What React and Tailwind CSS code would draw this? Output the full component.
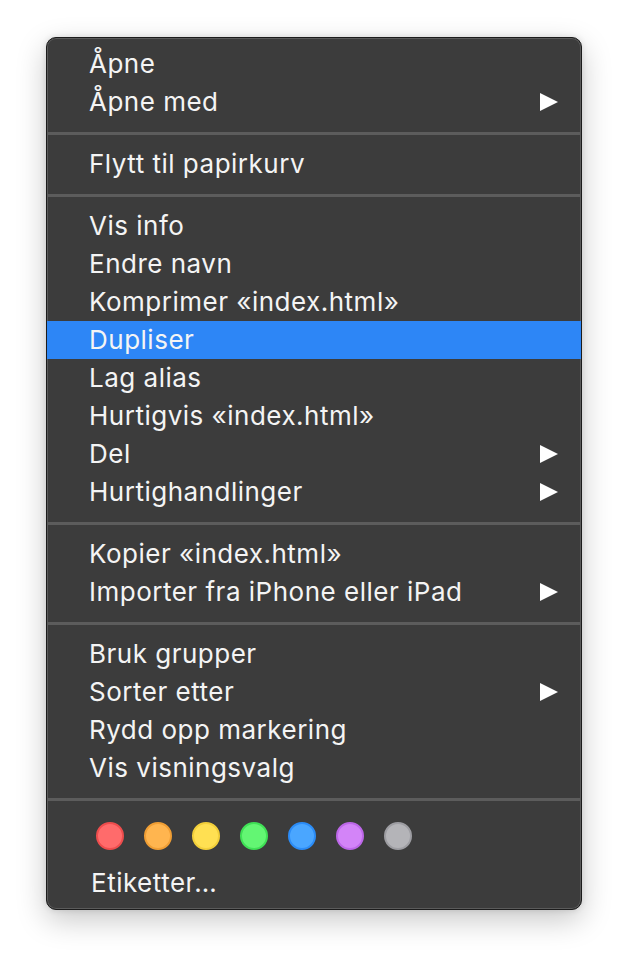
import React from 'react';

const groups = [
    [
        { label: 'Åpne' },
        { label: 'Åpne med', sub: true },
    ],
    [
        { label: 'Flytt til papirkurv' },
    ],
    [
        { label: 'Vis info' },
        { label: 'Endre navn' },
        { label: 'Komprimer «index.html»' },
        { label: 'Dupliser', active: true },
        { label: 'Lag alias' },
        { label: 'Hurtigvis «index.html»' },
        { label: 'Del', sub: true },
        { label: 'Hurtighandlinger', sub: true },
    ],
    [
        { label: 'Kopier «index.html»' },
        { label: 'Importer fra iPhone eller iPad', sub: true },
    ],
    [
        { label: 'Bruk grupper' },
        { label: 'Sorter etter', sub: true },
        { label: 'Rydd opp markering' },
        { label: 'Vis visningsvalg' },
    ],
];

const tags = [
    'bg-[#ff6b6b] border-[#ee4d4d]',
    'bg-[#ffb54f] border-[#f09e34]',
    'bg-[#ffe052] border-[#f2cf3a]',
    'bg-[#63f673] border-[#3fe055]',
    'bg-[#4aa6ff] border-[#2b8cf7]',
    'bg-[#d384f8] border-[#bd67e9]',
    'bg-[#b4b4b8] border-[#9d9da2]',
];

function Arrow() {
    return (
        <svg width="18" height="18" viewBox="0 0 18 18" className="shrink-0">
            <polygon points="0,0 18,9 0,18" fill="#ffffff" />
        </svg>
    );
}

function MenuItem({ label, sub, active }) {
    return (
        <div className={`flex items-center justify-between h-[38px] pl-[42px] pr-[23px] ${active ? 'bg-[#2d86f6]' : ''}`}>
            <span className="leading-none">{label}</span>
            {sub && <Arrow />}
        </div>
    );
}

function Separator() {
    return (
        <div className="pt-[11px] pb-[10px]">
            <div className="h-[3px] bg-[#5c5c5c]" />
        </div>
    );
}

export default function App() {
    return (
        <div className="min-h-[964px] bg-white pt-[37px] pl-[46px]">
            <div
                className="w-[536px] rounded-[10px] border border-[#1c1c1c] bg-[#3c3c3c] pt-[7px] pb-[7px] text-[26px] tracking-[0.5px] text-[#f4f4f4] shadow-[inset_0_0_0_1px_rgba(255,255,255,0.16),0_10px_30px_rgba(0,0,0,0.22),0_0_6px_rgba(0,0,0,0.12)] overflow-hidden"
                style={{ fontFamily: 'Inter, "Noto Sans", sans-serif' }}
            >
                {groups.map((g, i) => (
                    <React.Fragment key={i}>
                        {i > 0 && <Separator />}
                        {g.map((item) => <MenuItem key={item.label} {...item} />)}
                    </React.Fragment>
                ))}
                <Separator />
                <div className="flex gap-[20px] pl-[49px] pt-[11px]">
                    {tags.map((c) => (
                        <div key={c} className={`w-[28px] h-[28px] rounded-full border-2 ${c}`} />
                    ))}
                </div>
                <div className="flex items-center h-[38px] mt-[14px] pl-[44px]">
                    <span className="leading-none">Etiketter…</span>
                </div>
            </div>
        </div>
    );
}
